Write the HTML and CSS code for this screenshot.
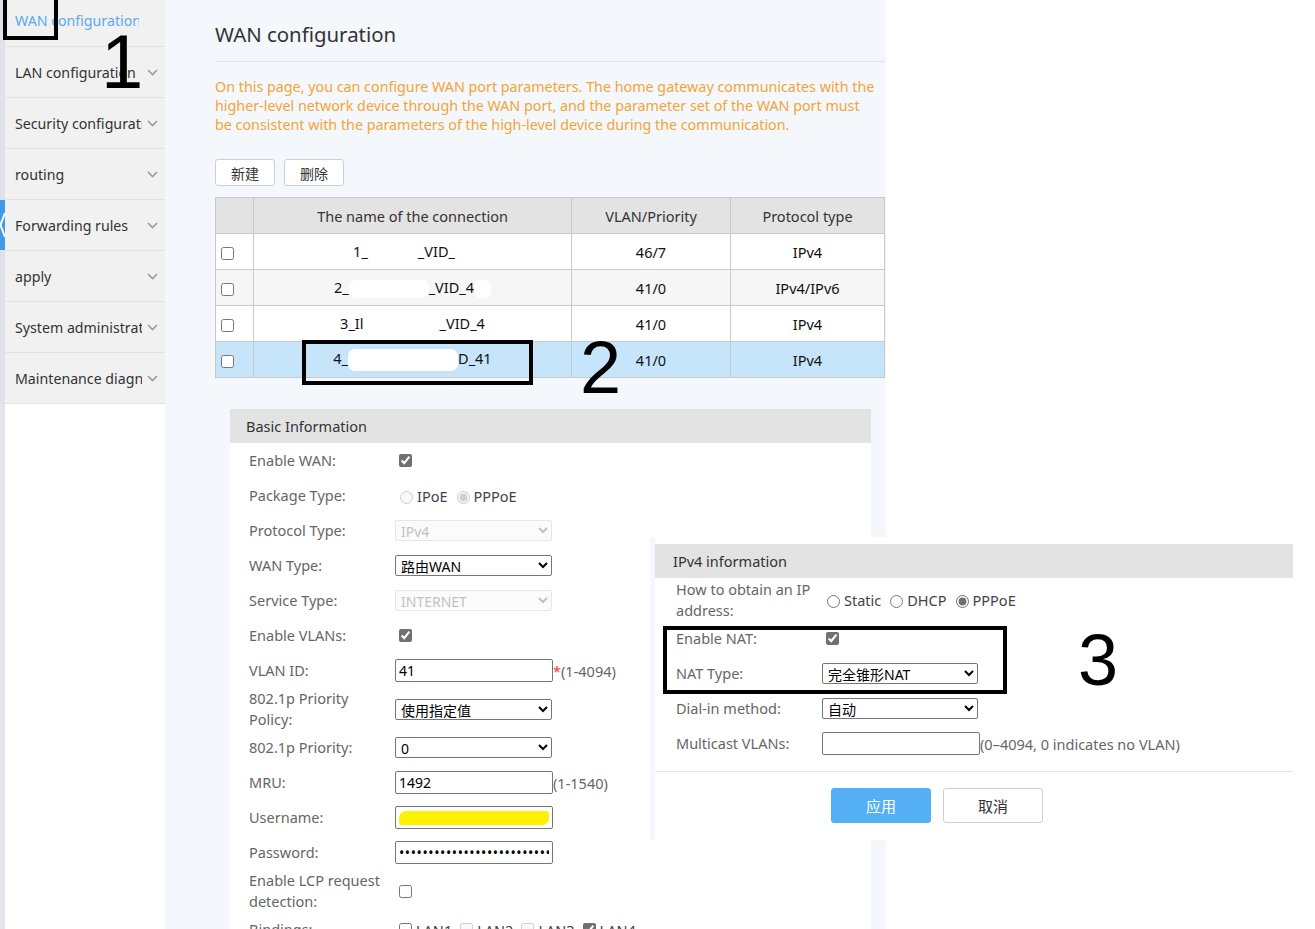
FILE: index.html
```html
<!DOCTYPE html>
<html lang="en">

<head>
    <meta charset="UTF-8">
    <meta name="viewport" content="width=device-width, initial-scale=1.0">
    <title>WAN configuration</title>
    <link rel="stylesheet" href="styles.css">
</head>

<body>
    <div class="page">
        <nav class="sidebar">
            <div class="menu-item first">
                <span class="rail"></span>
                <span class="menu-label active">WAN configuration</span>
            </div>
            <div class="menu-item">
                <span class="rail"></span>
                <span class="menu-label">LAN configuration</span>
                <svg class="chevron" viewBox="0 0 11 7"><polyline points="1,1 5.5,5.5 10,1" /></svg>
            </div>
            <div class="menu-item">
                <span class="rail"></span>
                <span class="menu-label">Security configuration</span>
                <svg class="chevron" viewBox="0 0 11 7"><polyline points="1,1 5.5,5.5 10,1" /></svg>
            </div>
            <div class="menu-item">
                <span class="rail"></span>
                <span class="menu-label">routing</span>
                <svg class="chevron" viewBox="0 0 11 7"><polyline points="1,1 5.5,5.5 10,1" /></svg>
            </div>
            <div class="menu-item">
                <svg class="rail-tab" viewBox="0 0 5 50"><rect width="5" height="50" fill="#3d9be9" /><polyline points="5,13 0.5,25 5,37" fill="none" stroke="#fff" stroke-width="2" /></svg>
                <span class="menu-label">Forwarding rules</span>
                <svg class="chevron" viewBox="0 0 11 7"><polyline points="1,1 5.5,5.5 10,1" /></svg>
            </div>
            <div class="menu-item">
                <span class="rail"></span>
                <span class="menu-label">apply</span>
                <svg class="chevron" viewBox="0 0 11 7"><polyline points="1,1 5.5,5.5 10,1" /></svg>
            </div>
            <div class="menu-item">
                <span class="rail"></span>
                <span class="menu-label">System administration</span>
                <svg class="chevron" viewBox="0 0 11 7"><polyline points="1,1 5.5,5.5 10,1" /></svg>
            </div>
            <div class="menu-item">
                <span class="rail"></span>
                <span class="menu-label">Maintenance diagnosis</span>
                <svg class="chevron" viewBox="0 0 11 7"><polyline points="1,1 5.5,5.5 10,1" /></svg>
            </div>
            <div class="sidebar-rest"></div>
        </nav>

        <main class="content">
            <h1 class="title">WAN configuration</h1>
            <hr class="divider">
            <p class="intro">On this page, you can configure WAN port parameters. The home gateway communicates with the
                higher-level network device through the WAN port, and the parameter set of the WAN port must be
                consistent with the parameters of the high-level device during the communication.</p>

            <div class="toolbar">
                <button class="btn">新建</button>
                <button class="btn">删除</button>
            </div>

            <table class="conn-table">
                <tr>
                    <th class="col-check"></th>
                    <th class="col-name">The name of the connection</th>
                    <th class="col-vlan">VLAN/Priority</th>
                    <th>Protocol type</th>
                </tr>
                <tr>
                    <td class="col-check"><input type="checkbox"></td>
                    <td>1_<span class="redact w50"></span>_VID_<span class="redact w17"></span></td>
                    <td>46/7</td>
                    <td>IPv4</td>
                </tr>
                <tr class="even">
                    <td class="col-check"><input type="checkbox"></td>
                    <td>2_<span class="redact w80"></span>_VID_4<span class="redact w17"></span></td>
                    <td>41/0</td>
                    <td>IPv4/IPv6</td>
                </tr>
                <tr>
                    <td class="col-check"><input type="checkbox"></td>
                    <td>3_Il<span class="redact w76"></span>_VID_4</td>
                    <td>41/0</td>
                    <td>IPv4</td>
                </tr>
                <tr class="selected">
                    <td class="col-check"><input type="checkbox"></td>
                    <td>4_<span class="redact w110 tall"></span>D_41</td>
                    <td>41/0</td>
                    <td>IPv4</td>
                </tr>
            </table>

            <section class="panel">
                <div class="panel-head">Basic Information</div>
                <div class="panel-body">
                    <div class="form-row">
                        <label class="form-label">Enable WAN:</label>
                        <input type="checkbox" class="grey" checked>
                    </div>
                    <div class="form-row">
                        <label class="form-label">Package Type:</label>
                        <input type="radio" name="pkg" disabled><span class="opt">IPoE</span>
                        <input type="radio" name="pkg" checked disabled><span class="opt">PPPoE</span>
                    </div>
                    <div class="form-row">
                        <label class="form-label">Protocol Type:</label>
                        <select class="field" disabled><option>IPv4</option></select>
                    </div>
                    <div class="form-row">
                        <label class="form-label">WAN Type:</label>
                        <select class="field"><option>路由WAN</option></select>
                    </div>
                    <div class="form-row">
                        <label class="form-label">Service Type:</label>
                        <select class="field" disabled><option>INTERNET</option></select>
                    </div>
                    <div class="form-row">
                        <label class="form-label">Enable VLANs:</label>
                        <input type="checkbox" class="grey" checked>
                    </div>
                    <div class="form-row">
                        <label class="form-label">VLAN ID:</label>
                        <input type="text" class="text-field" value="41"><span class="hint"><span class="req">*</span>(1-4094)</span>
                    </div>
                    <div class="form-row tall">
                        <label class="form-label">802.1p Priority Policy:</label>
                        <select class="field"><option>使用指定值</option></select>
                    </div>
                    <div class="form-row">
                        <label class="form-label">802.1p Priority:</label>
                        <select class="field"><option>0</option></select>
                    </div>
                    <div class="form-row">
                        <label class="form-label">MRU:</label>
                        <input type="text" class="text-field" value="1492"><span class="hint">(1-1540)</span>
                    </div>
                    <div class="form-row">
                        <label class="form-label">Username:</label>
                        <div class="text-field masked"><span class="marker"></span></div>
                    </div>
                    <div class="form-row">
                        <label class="form-label">Password:</label>
                        <input type="password" class="text-field secret" value="abcdefghijklmnopqrstuvwxyz">
                    </div>
                    <div class="form-row tall">
                        <label class="form-label">Enable LCP request detection:</label>
                        <input type="checkbox">
                    </div>
                    <div class="form-row">
                        <label class="form-label">Bindings:</label>
                        <input type="checkbox"><span class="opt">LAN1</span>
                        <input type="checkbox" disabled><span class="opt">LAN2</span>
                        <input type="checkbox" disabled><span class="opt">LAN3</span>
                        <input type="checkbox" class="grey" checked><span class="opt">LAN4</span>
                    </div>
                </div>
            </section>
        </main>
    </div>

    <!-- IPv4 settings block -->
    <section class="ipv4-panel">
        <div class="panel-head wide">IPv4 information</div>
        <div class="ipv4-body">
            <div class="form-row tall">
                <label class="form-label">How to obtain an IP address:</label>
                <input type="radio" name="ip"><span class="opt">Static</span>
                <input type="radio" name="ip"><span class="opt">DHCP</span>
                <input type="radio" name="ip" class="grey" checked><span class="opt">PPPoE</span>
            </div>
            <div class="form-row">
                <label class="form-label">Enable NAT:</label>
                <input type="checkbox" class="grey" checked>
            </div>
            <div class="form-row">
                <label class="form-label">NAT Type:</label>
                <select class="field narrow"><option>完全锥形NAT</option></select>
            </div>
            <div class="form-row">
                <label class="form-label">Dial-in method:</label>
                <select class="field narrow"><option>自动</option></select>
            </div>
            <div class="form-row">
                <label class="form-label">Multicast VLANs:</label>
                <input type="text" class="text-field"><span class="hint">(0–4094, 0 indicates no VLAN)</span>
            </div>
        </div>
        <div class="panel-foot">
            <button class="btn-lg primary">应用</button>
            <button class="btn-lg">取消</button>
        </div>
    </section>

    <!-- callouts -->
    <div class="mark-box box-1"></div>
    <div class="mark-num num-1">1</div>
    <div class="mark-box box-2"></div>
    <div class="mark-num num-2">2</div>
    <div class="mark-box box-3"></div>
    <div class="mark-num num-3">3</div>
</body>

</html>
```

FILE: styles.css
```css
* {
    margin: 0;
    padding: 0;
}

html,
body {
    height: 100%;
    overflow: hidden;
}

body {
    position: relative;
    background: #fff;
    font-family: "Noto Sans", "Noto Sans CJK SC", sans-serif;
    font-size: 14.5px;
    color: #333;
}

.page {
    display: flex;
    min-height: 100%;
}

/* left menu */

.sidebar {
    width: 165px;
    flex-shrink: 0;
    display: flex;
    flex-direction: column;
}

.menu-item {
    display: flex;
    align-items: center;
    height: 50px;
    background: #f1f1f1;
    border-bottom: 1px solid #e3e3e3;
    font-size: 14.2px;
}

.menu-item.first {
    box-sizing: border-box;
    height: 47px;
    padding-bottom: 5px;
}

.menu-item.first .rail {
    margin-bottom: -5px;
}

.rail {
    width: 5px;
    align-self: stretch;
    background: #dfe3e9;
}

.rail-tab {
    width: 5px;
    height: 50px;
    flex-shrink: 0;
}

.menu-label {
    flex: 1;
    margin: 0 5px 0 10px;
    overflow: hidden;
    white-space: nowrap;
    color: #333;
}

.menu-label.active {
    color: #5aaaf0;
    margin-right: 26px;
}

.chevron {
    width: 11px;
    height: 7px;
    margin-right: 7px;
    fill: none;
    stroke: #9a9a9a;
    stroke-width: 1.6;
}

.sidebar-rest {
    flex: 1;
    border-left: 5px solid #e3e7ec;
}

/* main area */

.content {
    width: 721px;
    flex-shrink: 0;
    box-sizing: border-box;
    padding: 20px 1px 0 50px;
    background: #f4f7fb;
}

.title {
    font-size: 20.4px;
    font-weight: normal;
    line-height: 28px;
    color: #333;
}

.divider {
    border: 0;
    border-top: 1px solid #e1e5ea;
    margin-top: 13px;
}

.intro {
    max-width: 662px;
    margin-top: 15px;
    line-height: 19px;
    font-size: 14.3px;
    color: #f3a536;
}

.toolbar {
    display: flex;
    gap: 9px;
    margin-top: 25px;
}

.btn {
    width: 60px;
    height: 27px;
    background: #fff;
    border: 1px solid #cfcfcf;
    border-radius: 3px;
    font-family: inherit;
    font-size: 14px;
    color: #333;
}

.conn-table {
    width: 670px;
    margin-top: 11px;
    border-collapse: collapse;
    background: #fff;
}

.conn-table th,
.conn-table td {
    height: 35px;
    padding: 0;
    border: 1px solid #c9c9c9;
    text-align: center;
    font-weight: normal;
}

.conn-table th {
    background: #e3e3e3;
    color: #333;
}

.conn-table td {
    color: #111;
}

.conn-table .col-check {
    width: 32px;
    padding-left: 5px;
    text-align: left;
}

.col-name {
    width: 317px;
}

.col-vlan {
    width: 158px;
}

.conn-table tr.even td {
    background: #f6f6f6;
}

.conn-table tr.selected td {
    background: #c6e5fb;
}

.conn-table input[type="checkbox"] {
    margin: 0;
    vertical-align: middle;
}

.redact {
    display: inline-block;
    height: 18px;
    vertical-align: middle;
    background: #fff;
    border-radius: 7px;
}

.redact.tall {
    height: 22px;
}

.w17 { width: 17px; }
.w50 { width: 50px; }
.w76 { width: 76px; }
.w80 { width: 80px; }
.w110 { width: 110px; }

/* forms */

.panel {
    margin: 31px 14px 0 15px;
    background: #fff;
}

.panel-head {
    height: 34px;
    line-height: 34px;
    padding-left: 16px;
    background: #e3e3e3;
    color: #333;
}

.panel-body {
    padding-left: 19px;
}

.form-row {
    display: flex;
    align-items: center;
    min-height: 35px;
}

.form-row.tall {
    min-height: 42px;
}

.form-label {
    width: 146px;
    flex-shrink: 0;
    box-sizing: border-box;
    padding-right: 8px;
    line-height: 21px;
    color: #666;
}

input[type="checkbox"] {
    flex-shrink: 0;
    margin: 3px 3px 3px 4px;
}

input[type="radio"] {
    flex-shrink: 0;
    margin: 3px 3px 0 5px;
}

input.grey {
    accent-color: #707070;
}

.opt {
    margin: 0 4px 0 1px;
    color: #444;
}

.field {
    width: 157px;
    height: 21px;
    padding: 0 1px;
    border: 1px solid #767676;
    border-radius: 2px;
    background: #fff;
    font-family: inherit;
    font-size: 14px;
    color: #000;
}

.field:disabled {
    border-color: #dcdcdc;
    background: #fafafa;
    color: #a8a8a8;
}

.field.narrow {
    width: 156px;
}

.text-field {
    width: 158px;
    height: 23px;
    box-sizing: border-box;
    padding: 0 3px;
    border: 1px solid #767676;
    border-radius: 2px;
    font-family: inherit;
    font-size: 14px;
    color: #000;
}

.text-field.secret {
    letter-spacing: 0.6px;
}

.text-field.masked {
    display: flex;
    align-items: center;
}

.marker {
    width: 150px;
    height: 14px;
    background: #fff200;
    border-radius: 7px 3px 7px 3px;
}

.hint {
    color: #666;
}

.req {
    color: #e33;
}

/* IPv4 block */

.ipv4-panel {
    position: absolute;
    left: 650px;
    top: 537px;
    width: 643px;
    height: 303px;
    box-sizing: border-box;
    padding-top: 7px;
    background: #fff;
    border-left: 5px solid #f4f7fb;
}

.panel-head.wide {
    padding-left: 18px;
}

.ipv4-body {
    padding-left: 21px;
}

.ipv4-body .form-row.tall {
    min-height: 43px;
}

.panel-foot {
    display: flex;
    gap: 12px;
    margin-top: 10px;
    padding: 16px 0 0 176px;
    border-top: 1px solid #e6e6e6;
}

.btn-lg {
    width: 100px;
    height: 35px;
    background: #fff;
    border: 1px solid #cfcfcf;
    border-radius: 3px;
    font-family: inherit;
    font-size: 15px;
    color: #333;
}

.btn-lg.primary {
    background: #55aff5;
    border-color: #55aff5;
    color: #fff;
}

/* callouts */

.mark-box {
    position: absolute;
    box-sizing: border-box;
    border: 4px solid #000;
}

.box-1 {
    left: 3px;
    top: -4px;
    width: 55px;
    height: 44px;
}

.box-2 {
    left: 302px;
    top: 340px;
    width: 231px;
    height: 45px;
}

.box-3 {
    left: 663px;
    top: 626px;
    width: 344px;
    height: 68px;
}

.mark-num {
    position: absolute;
    font-family: "Liberation Sans", sans-serif;
    font-size: 76px;
    line-height: 1;
    color: #000;
}

.num-1 {
    left: 101px;
    top: 24px;
}

.num-2 {
    left: 580px;
    top: 331px;
    font-size: 74px;
}

.num-3 {
    left: 1078px;
    top: 624px;
    font-size: 72px;
}
```
